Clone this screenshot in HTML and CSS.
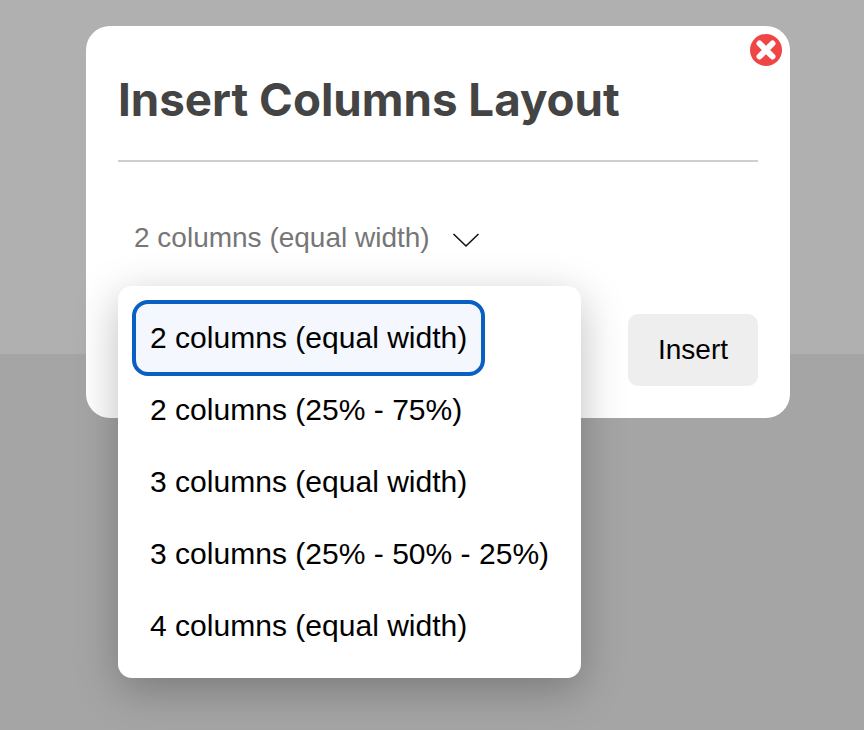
FILE: index.html
```html
<!DOCTYPE html>
<html lang="en">
<head>
    <meta charset="UTF-8">
    <meta name="viewport" content="width=device-width, initial-scale=1.0">
    <title>Insert Columns Layout</title>
    <link rel="stylesheet" href="styles.css">
</head>
<body>
    <div class="backdrop-top"></div>
    <div class="backdrop-bottom"></div>

    <div class="dialog">
        <button class="close" aria-label="Close">
            <svg viewBox="0 0 32 32" width="32" height="32">
                <circle cx="16" cy="16" r="16" fill="#f04545"/>
                <path d="M9.5 9.5 L22.5 22.5 M22.5 9.5 L9.5 22.5" stroke="#fff" stroke-width="6" stroke-linecap="round" fill="none"/>
            </svg>
        </button>
        <h1>Insert Columns Layout</h1>
        <div class="select-row">
            <span class="select-value">2 columns (equal width)</span>
            <svg class="chevron" viewBox="0 0 28 16" width="28" height="16">
                <path d="M1.5 2 L14 14 L26.5 2" stroke="#111" stroke-width="1.6" fill="none"/>
            </svg>
        </div>
        <div class="actions">
            <button class="insert">Insert</button>
        </div>

        <ul class="menu">
            <li class="selected">2 columns (equal width)</li>
            <li>2 columns (25% - 75%)</li>
            <li>3 columns (equal width)</li>
            <li>3 columns (25% - 50% - 25%)</li>
            <li>4 columns (equal width)</li>
        </ul>
    </div>
</body>
</html>
```

FILE: styles.css
```css
html, body {
    margin: 0;
    height: 100%;
}
body {
    display: flex;
    flex-direction: column;
    height: 730px;
    overflow: hidden;
    font-family: "Liberation Sans", Arial, sans-serif;
}
.backdrop-top {
    height: 354px;
    background-color: #b0b0b0;
}
.backdrop-bottom {
    flex: 1;
    background-color: #a5a5a5;
}
.dialog {
    position: absolute;
    left: 86px;
    top: 26px;
    width: 704px;
    height: 392px;
    box-sizing: border-box;
    padding: 45px 32px 32px;
    background-color: white;
    border-radius: 24px;
    display: flex;
    flex-direction: column;
}
.close {
    position: absolute;
    top: 8px;
    right: 8px;
    width: 32px;
    height: 32px;
    padding: 0;
    background: none;
    border: none;
}
.close svg {
    display: block;
}
h1 {
    margin: 0;
    padding-bottom: 31px;
    border-bottom: 2px solid #cfcfcf;
    font-family: Inter, sans-serif;
    font-size: 45.7px;
    line-height: 58px;
    font-weight: 700;
    color: #444;
}
.select-row {
    display: flex;
    align-items: center;
    gap: 22px;
    padding-left: 16px;
    margin-top: 59px;
    height: 34px;
}
.select-value {
    font-size: 28px;
    color: #767676;
}
.chevron {
    margin-top: 4px;
}
.actions {
    display: flex;
    justify-content: flex-end;
    margin-top: 60px;
}
.insert {
    width: 130px;
    height: 72px;
    background-color: #eee;
    border: none;
    border-radius: 10px;
    font-family: "Liberation Sans", Arial, sans-serif;
    font-size: 28px;
    color: #000;
}
.menu {
    position: absolute;
    left: 32px;
    top: 260px;
    width: 463px;
    height: 392px;
    box-sizing: border-box;
    margin: 0;
    padding: 14px;
    list-style: none;
    background-color: white;
    border-radius: 14px;
    box-shadow: 0 12px 44px rgba(0, 0, 0, 0.26);
    font-size: 30.05px;
    color: #000;
}
.menu li {
    height: 72px;
    box-sizing: border-box;
    padding: 0 18px;
    line-height: 72px;
    white-space: nowrap;
}
.menu li.selected {
    width: 353px;
    height: 76px;
    margin-bottom: -2px;
    line-height: 67px;
    padding: 0 14px;
    border: 4px solid #0a5fc2;
    border-radius: 16px;
    background-color: #f4f7fd;
}
```
